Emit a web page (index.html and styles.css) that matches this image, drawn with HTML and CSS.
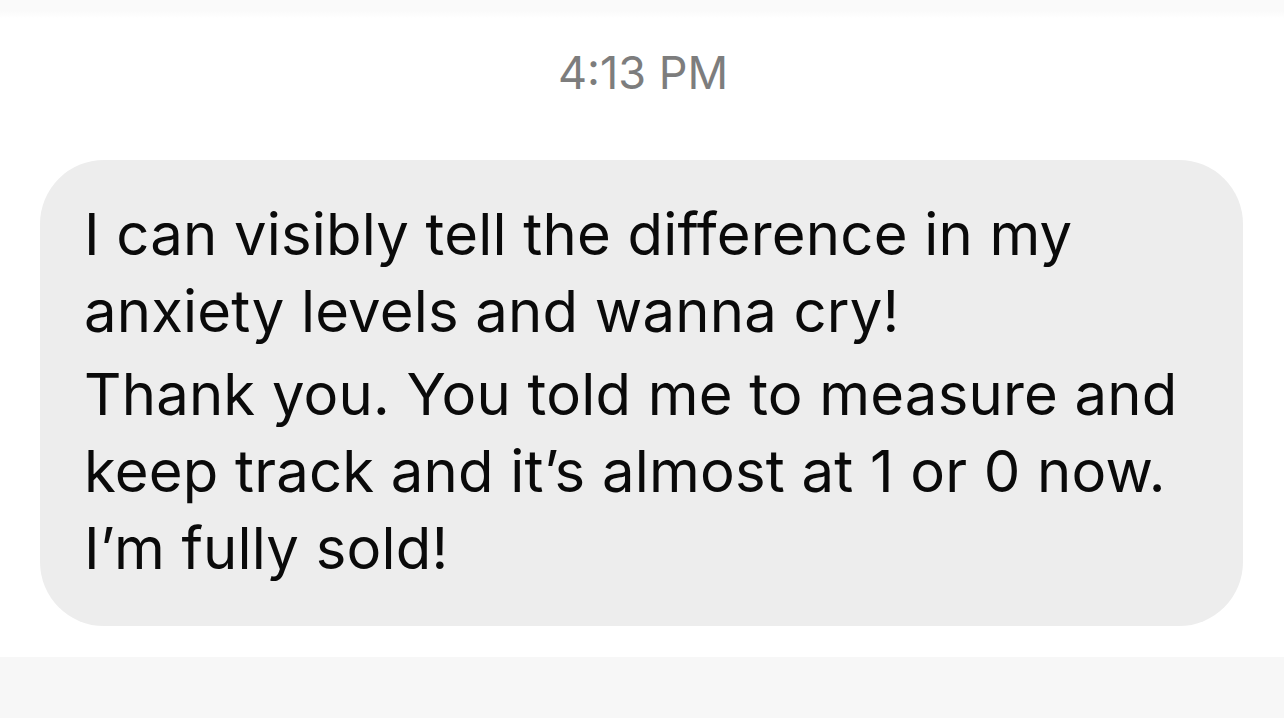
FILE: index.html
```html
<!DOCTYPE html>
<html lang="en">
<head>
<meta charset="utf-8">
<title>Message</title>
<link rel="stylesheet" href="styles.css">
</head>
<body>
<div class="screen">
  <div class="top-bar"></div>
  <div class="timestamp">4:13 PM</div>
  <div class="thread">
    <div class="bubble">
      <p class="para">I can visibly tell the difference in my<br>anxiety levels and wanna cry!</p>
      <p class="para">Thank you. You told me to measure and<br>keep track and it’s almost at 1 or 0 now.<br>I’m fully sold!</p>
    </div>
  </div>
  <div class="bottom-bar"></div>
</div>
</body>
</html>
```

FILE: styles.css
```css
html, body {
  margin: 0;
  padding: 0;
  background: #ffffff;
}

.screen {
  width: 1284px;
  height: 718px;
  display: flex;
  flex-direction: column;
  overflow: hidden;
  font-family: Inter, "Liberation Sans", Arial, sans-serif;
}

.top-bar {
  height: 18px;
  flex: none;
  background: linear-gradient(#fafafa 0%, #fafafa 60%, #ffffff 100%);
}

.timestamp {
  margin-top: 29px;
  text-align: center;
  font-size: 45px;
  line-height: 52px;
  color: #7d7d7d;
  padding-left: 2px;
}

.thread {
  margin-top: 61px;
  padding: 0 41px 0 40px;
}

.bubble {
  background: #ededed;
  border-radius: 64px;
  padding: 36px 40px 39px 44px;
}

.para {
  margin: 0;
  font-size: 58px;
  line-height: 77px;
  letter-spacing: 0.2px;
  color: #0a0a0a;
  white-space: nowrap;
}

.para + .para {
  margin-top: 6px;
}

.bottom-bar {
  margin-top: auto;
  height: 61px;
  flex: none;
  background: #f7f7f7;
}
```
